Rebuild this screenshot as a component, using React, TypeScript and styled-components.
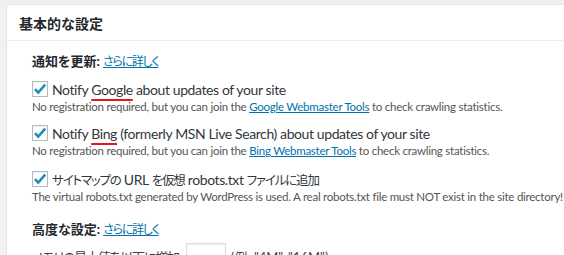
import React from "react";
import styled, { createGlobalStyle } from "styled-components";

const GlobalStyle = createGlobalStyle`
	body {
		margin: 0;
		background: #f1f1f1;
		overflow: hidden;
		font-family: Lato, "Noto Sans CJK JP", sans-serif;
		font-feature-settings: "palt";
		color: #444;
	}
`;

const Page = () => {
	return (
		<>
			<GlobalStyle />
			<Panel>
				<PanelHeader>
					<PanelTitle>基本的な設定</PanelTitle>
				</PanelHeader>
				<PanelBody>
					<SectionTitle>
						通知を更新:{" "}
						<Link>
							<Jp $size={12} $tight={1.3}>さらに詳しく</Jp>
						</Link>
					</SectionTitle>

					<Option $gap={8}>
						<CheckRow>
							<CheckBox />
							<span>
								Notify <Marked>Google</Marked> about updates of your site
							</span>
						</CheckRow>
						<Description>
							No registration required, but you can join the{" "}
							<Link>Google Webmaster Tools</Link> to check crawling statistics.
						</Description>
					</Option>

					<Option $gap={8}>
						<CheckRow>
							<CheckBox />
							<span>
								Notify <Marked>Bing</Marked> (formerly MSN Live Search) about
								updates of your site
							</span>
						</CheckRow>
						<Description>
							No registration required, but you can join the{" "}
							<Link>Bing Webmaster Tools</Link> to check crawling statistics.
						</Description>
					</Option>

					<Option $gap={10}>
						<CheckRow>
							<CheckBox />
							<span>
								<Jp $size={12.5} $tight={1.2}>サイトマップの</Jp> URL{" "}
								<Jp $size={12.5} $tight={1.2}>を仮想</Jp> robots.txt{" "}
								<Jp $size={12.5} $tight={1.2}>ファイルに追加</Jp>
							</span>
						</CheckRow>
						<Description>
							The virtual robots.txt generated by WordPress is used. A real
							robots.txt file must NOT exist in the site directory!
						</Description>
					</Option>

					<SectionTitle $gap={14}>
						高度な設定:{" "}
						<Link>
							<Jp $size={12} $tight={1.3}>さらに詳しく</Jp>
						</Link>
					</SectionTitle>

					<MemoryRow>
						<Jp $tight={1.2}>メモリの最大値を以下に増加:</Jp>
						<SmallInput />
						<span>(例: "4M", "16M")</span>
					</MemoryRow>
				</PanelBody>
			</Panel>
		</>
	);
};

const CheckBox = () => (
	<Box>
		<svg width="14" height="14" viewBox="0 0 14 14">
			<path
				d="M2 7.2 L5.2 10.6 L12.2 2.6"
				fill="none"
				stroke="#1e8cbe"
				strokeWidth="2.6"
			/>
		</svg>
	</Box>
);

export default Page;

const Panel = styled.div`
	margin: 4px 0 0 6px;
	width: 620px;
	background: #fff;
	border: 1px solid #e5e5e5;
	box-shadow: 0 1px 1px rgba(0, 0, 0, 0.04);
`;

const PanelHeader = styled.div`
	height: 35px;
	display: flex;
	align-items: center;
	padding-left: 12px;
	border-bottom: 1px solid #eee;
`;

const PanelTitle = styled.h2`
	margin: 0;
	font-size: 14px;
	font-weight: 700;
	color: #23282d;
	font-family: "Noto Sans CJK JP", sans-serif;
	font-feature-settings: normal;
`;

const PanelBody = styled.div`
	padding: 10px 0 20px 25px;
`;

const SectionTitle = styled.div<{ $gap?: number }>`
	margin-top: ${(p) => p.$gap ?? 0}px;
	height: 20px;
	line-height: 20px;
	font-size: 13px;
	font-weight: 700;
	color: #23282d;

	a {
		font-weight: 400;
	}
`;

const Jp = styled.span<{ $tight: number; $size?: number }>`
	font-size: ${(p) => (p.$size ? `${p.$size}px` : "inherit")};
	letter-spacing: -${(p) => p.$tight}px;
`;

const Link = styled.a`
	color: #0073aa;
	text-decoration: underline;
	cursor: pointer;
`;

const Option = styled.div<{ $gap: number }>`
	margin-top: ${(p) => p.$gap}px;
`;

const CheckRow = styled.label`
	display: flex;
	align-items: center;
	gap: 4px;
	height: 20px;
	font-size: 14px;
	letter-spacing: -0.4px;
	color: #32373c;
	white-space: nowrap;
`;

const Box = styled.span`
	flex: none;
	width: 16px;
	height: 16px;
	box-sizing: border-box;
	border: 1px solid #b4b9be;
	background: #fff;
	box-shadow: inset 0 1px 2px rgba(0, 0, 0, 0.07);
	display: flex;
	align-items: center;
	justify-content: center;
`;

const Marked = styled.span`
	text-decoration: underline;
	text-decoration-color: #e3191f;
	text-decoration-thickness: 2px;
	text-underline-offset: 4px;
`;

const Description = styled.p`
	margin: 0;
	height: 16px;
	line-height: 16px;
	font-size: 11.5px;
	letter-spacing: -0.25px;
	color: #555;
	white-space: nowrap;
`;

const MemoryRow = styled.div`
	margin-top: 4px;
	display: flex;
	align-items: center;
	gap: 5px;
	font-size: 13px;
	color: #444;
	white-space: nowrap;
`;

const SmallInput = styled.span`
	display: inline-block;
	width: 40px;
	height: 26px;
	box-sizing: border-box;
	border: 1px solid #ddd;
	box-shadow: inset 0 1px 2px rgba(0, 0, 0, 0.07);
	background: #fff;
`;
